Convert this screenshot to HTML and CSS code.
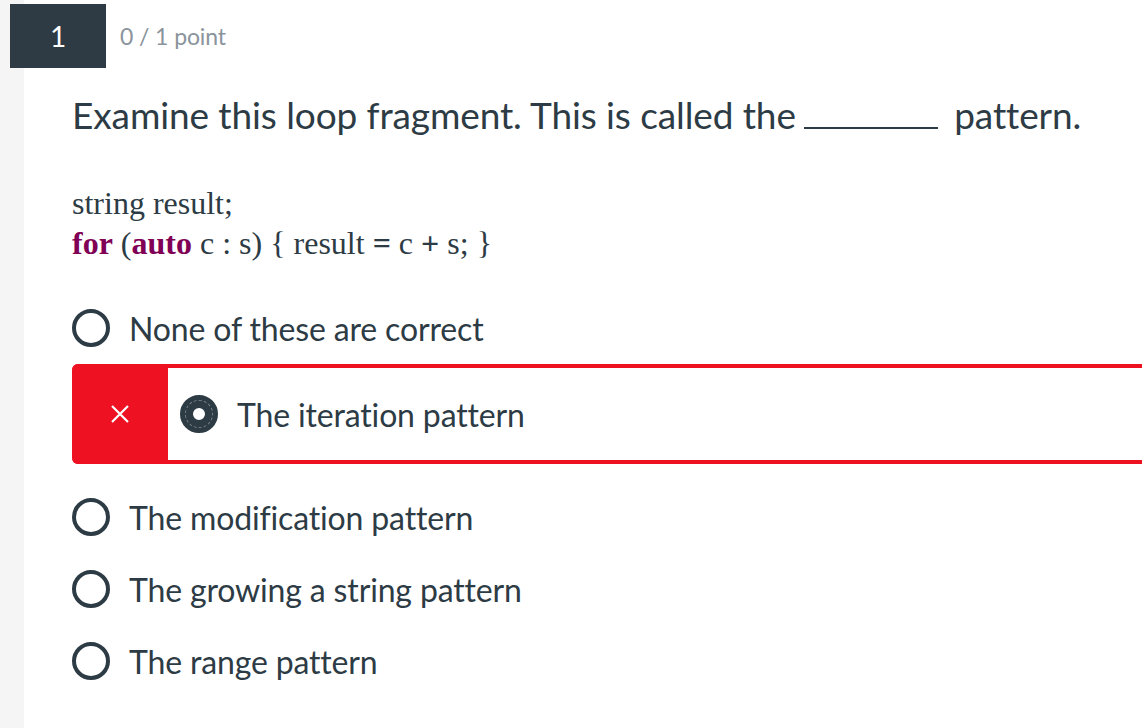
FILE: index.html
```html
<!DOCTYPE html>
<html lang="en">
<head>
    <meta charset="UTF-8">
    <title>Quiz question</title>
    <link rel="stylesheet" href="styles.css">
</head>
<body>
    <div class="page">
        <!-- Question header -->
        <div class="q-header">
            <div class="q-number">1</div>
            <div class="q-points">0 / 1 point</div>
        </div>

        <div class="q-body">
            <p class="prompt">Examine this loop fragment. This is called the <span class="blank"></span>pattern.</p>

            <div class="code">
                <div>string result;</div>
                <div><b class="kw">for</b> (<b class="kw">auto</b> c : s) { result <b>=</b> c <b>+</b> s; }</div>
            </div>

            <!-- Answer options -->
            <div class="options">
                <label class="option"><span class="radio"></span>None of these are correct</label>

                <div class="option-wrong">
                    <div class="wrong-mark">
                        <svg width="20" height="20" viewBox="0 0 20 20"><path d="M2 2 L18 18 M18 2 L2 18" stroke="#fff" stroke-width="2.2" fill="none"/></svg>
                    </div>
                    <label class="option"><span class="radio checked"></span>The iteration pattern</label>
                </div>

                <label class="option"><span class="radio"></span>The modification pattern</label>
                <label class="option"><span class="radio"></span>The growing a string pattern</label>
                <label class="option"><span class="radio"></span>The range pattern</label>
            </div>
        </div>
    </div>
</body>
</html>
```

FILE: styles.css
```css
* { box-sizing: border-box; margin: 0; padding: 0; }
body {
    font-family: Lato, "Open Sans", sans-serif; color: #2d3b45;
    background: linear-gradient(to right, #f5f5f5 24px, #fff 24px);
    min-height: 100vh; overflow: hidden;
}

.page { padding: 4px 0 0 10px; }

/* Header */
.q-header { display: flex; align-items: center; gap: 14px; }
.q-number {
    width: 96px; height: 64px; background: #2e3a44; color: #fff;
    display: flex; align-items: center; justify-content: center; font-size: 28px;
}
.q-points { color: #8a949c; font-size: 23px; letter-spacing: -0.1px; }

/* Question body */
.q-body { margin-left: 62px; }
.prompt { font-size: 37px; line-height: 44px; margin-top: 25px; letter-spacing: -0.1px; }
.blank { display: inline-block; width: 134px; border-bottom: 2px solid #2d3b45; margin: 0 16px 0 -1px; }

.code { font-family: "Liberation Serif", serif; font-size: 32px; line-height: 40px; margin-top: 46px; }
.kw { color: #7f0055; }

/* Options */
.options { margin-top: 41px; }
.option { display: flex; align-items: center; gap: 19px; height: 48px; font-size: 32px; margin-bottom: 24px; letter-spacing: -0.15px; }
.radio { width: 38px; height: 38px; border: 4px solid #2d3b45; border-radius: 50%; flex-shrink: 0; position: relative; }
.radio.checked { border-width: 13px; background: #fff; }
.radio.checked::after {
    content: ""; position: absolute; inset: -8px; border-radius: 50%;
    border: 1px dashed rgba(255, 255, 255, 0.35);
}

.option-wrong {
    display: flex; height: 100px; margin: -12px 0 29px;
    border-top: 4px solid #ee1122; border-bottom: 4px solid #ee1122;
    border-radius: 6px 0 0 6px;
}
.wrong-mark {
    width: 96px; background: #ee1122; margin: -4px 0;
    border-radius: 6px 0 0 6px;
    display: flex; align-items: center; justify-content: center;
}
.option-wrong .option { margin: 0 0 0 12px; height: auto; }
```
